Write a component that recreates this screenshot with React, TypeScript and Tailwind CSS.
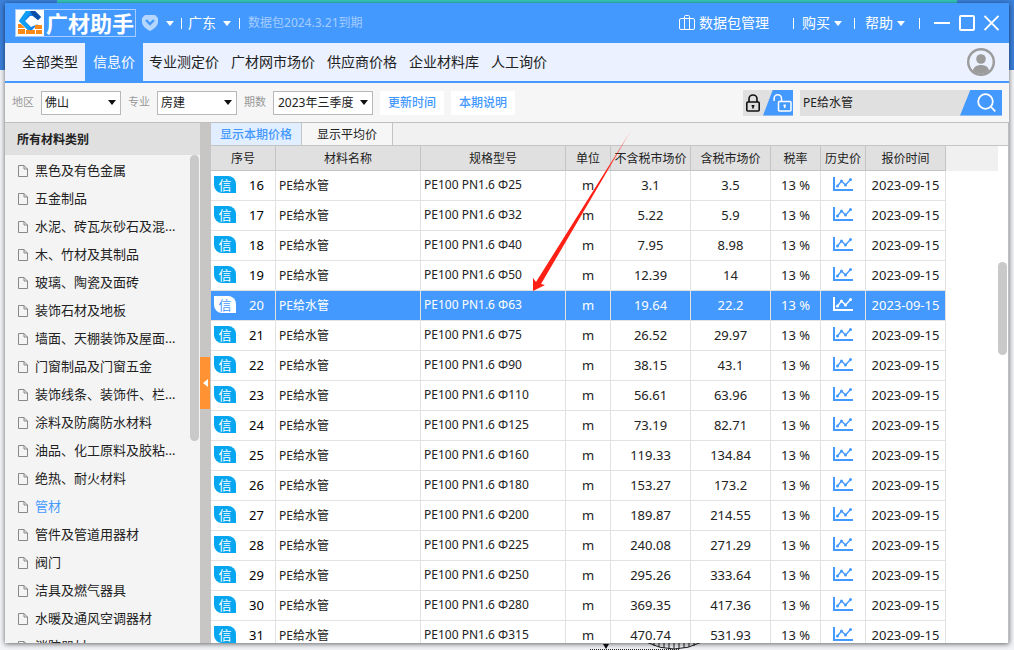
import { useState } from 'react';

const navItems = ['全部类型', '信息价', '专业测定价', '广材网市场价', '供应商价格', '企业材料库', '人工询价'];

const categories = [
    '黑色及有色金属',
    '五金制品',
    '水泥、砖瓦灰砂石及混...',
    '木、竹材及其制品',
    '玻璃、陶瓷及面砖',
    '装饰石材及地板',
    '墙面、天棚装饰及屋面...',
    '门窗制品及门窗五金',
    '装饰线条、装饰件、栏...',
    '涂料及防腐防水材料',
    '油品、化工原料及胶粘...',
    '绝热、耐火材料',
    '管材',
    '管件及管道用器材',
    '阀门',
    '洁具及燃气器具',
    '水暖及通风空调器材',
    '消防器材',
];

const columns = [
    { title: '序号', width: 'w-[65px]' },
    { title: '材料名称', width: 'w-[145px]' },
    { title: '规格型号', width: 'w-[145px]' },
    { title: '单位', width: 'w-[45px]' },
    { title: '不含税市场价', width: 'w-[80px]' },
    { title: '含税市场价', width: 'w-[80px]' },
    { title: '税率', width: 'w-[50px]' },
    { title: '历史价', width: 'w-[45px]' },
    { title: '报价时间', width: 'w-[80px]' },
];

const rows = [
    { id: 16, size: 25, net: '3.1', gross: '3.5' },
    { id: 17, size: 32, net: '5.22', gross: '5.9' },
    { id: 18, size: 40, net: '7.95', gross: '8.98' },
    { id: 19, size: 50, net: '12.39', gross: '14' },
    { id: 20, size: 63, net: '19.64', gross: '22.2' },
    { id: 21, size: 75, net: '26.52', gross: '29.97' },
    { id: 22, size: 90, net: '38.15', gross: '43.1' },
    { id: 23, size: 110, net: '56.61', gross: '63.96' },
    { id: 24, size: 125, net: '73.19', gross: '82.71' },
    { id: 25, size: 160, net: '119.33', gross: '134.84' },
    { id: 26, size: 180, net: '153.27', gross: '173.2' },
    { id: 27, size: 200, net: '189.87', gross: '214.55' },
    { id: 28, size: 225, net: '240.08', gross: '271.29' },
    { id: 29, size: 250, net: '295.26', gross: '333.64' },
    { id: 30, size: 280, net: '369.35', gross: '417.36' },
    { id: 31, size: 315, net: '470.74', gross: '531.93' },
];

function Caret() {
    return (
        <svg width="8" height="5" viewBox="0 0 8 5" fill="currentColor" className="shrink-0">
            <path d="M0 0h8L4 5z" />
        </svg>
    );
}

function Divider() {
    return <span className="h-[11px] w-px bg-white" />;
}

function Logo() {
    return (
        <div className="flex h-7 items-center border border-[#a5cdff]">
            <svg width="28" height="26" viewBox="0 0 28 26">
                <path d="M0 0h28v26H0z" fill="#fff" />
                <path d="M10 1h9l6 6-3 3-5-4h-3l-5 5 6 6 7-3-6 6h-4L3 11z" fill="#1683ec" />
                <path d="M10 1h5L8 11l7 7-3 2-9-9z" fill="#0fa0f5" />
                <path d="M19 1l6 6-3 3-5-4-3-5z" fill="#0d4ea6" />
                <path
                    d="M2 14h3l4 4H2zM19 15h7v4h-7zM2 19h7v5H2zM10 20h9v4h-9zM20 20h6v4h-6z"
                    fill="#ff8a17"
                />
            </svg>
            <span className="pl-0.5 pr-px text-[22px] leading-[26px] font-bold text-white">广材助手</span>
        </div>
    );
}

function TitleBar() {
    return (
        <header className="flex h-10 shrink-0 items-center bg-[#4499ff] px-2.5 text-sm text-white">
            <Logo />
            <button aria-label="会员" className="ml-1.5 flex items-center gap-2">
                <svg width="16" height="16" viewBox="0 0 16 16">
                    <path d="M3 0h10l3 3v4c0 4-4 7-8 9-4-2-8-5-8-9V3z" fill="#b4d6ff" />
                    <path d="M4 5l4 4 4-4" fill="none" stroke="#4499ff" strokeWidth="2.4" />
                </svg>
                <Caret />
            </button>
            <span className="ml-[7px] flex">
                <Divider />
            </span>
            <button className="ml-1.5 flex items-center gap-[7px]">
                广东
                <Caret />
            </button>
            <span className="ml-2 flex">
                <Divider />
            </span>
            <span className="ml-2 text-xs text-[#a5cdff]">数据包2024.3.21到期</span>

            <div className="ml-auto flex items-center">
                <button className="flex items-center gap-1">
                    <svg width="16" height="16" viewBox="0 0 16 16" fill="none" stroke="#fff">
                        <rect x=".5" y="3.5" width="15" height="11" rx="1.5" />
                        <path d="M5.5 14.5v-13q0-1 1-1h3q1 0 1 1v13" />
                    </svg>
                    数据包管理
                </button>
                <span className="mr-2 ml-6 flex">
                    <Divider />
                </span>
                <button className="flex items-center gap-1">
                    购买
                    <Caret />
                </button>
                <span className="mr-2.5 ml-3 flex">
                    <Divider />
                </span>
                <button className="flex items-center gap-1">
                    帮助
                    <Caret />
                </button>
                <span className="mr-3.5 ml-3.5 flex">
                    <Divider />
                </span>
                <div className="flex items-center gap-[9px]">
                    <button aria-label="最小化">
                        <svg width="16" height="16" viewBox="0 0 16 16">
                            <path d="M0 8h16" stroke="#fff" strokeWidth="2" />
                        </svg>
                    </button>
                    <button aria-label="最大化">
                        <svg width="16" height="16" viewBox="0 0 16 16">
                            <rect x="1" y="1" width="14" height="14" rx="1" fill="none" stroke="#fff" strokeWidth="2" />
                        </svg>
                    </button>
                    <button aria-label="关闭">
                        <svg width="15" height="16" viewBox="0 0 15 16">
                            <path d="M.5 1l14 14M14.5 1l-14 14" stroke="#fff" strokeWidth="1.8" />
                        </svg>
                    </button>
                </div>
            </div>
        </header>
    );
}

function NavBar() {
    return (
        <nav className="flex h-10 shrink-0 items-center border-b-2 border-[#4499ff] bg-[#ebf1ff] pl-2.5 text-sm text-[#222]">
            {navItems.map((item) => (
                <a
                    key={item}
                    href="#"
                    className={`flex h-full items-center ${
                        item === '信息价' ? 'bg-[#4499ff] px-2 text-white' : 'px-1.5 first:px-[7px]'
                    }`}
                >
                    {item}
                </a>
            ))}
            <button aria-label="用户" className="mr-3.5 ml-auto">
                <svg width="28" height="28" viewBox="0 0 28 28">
                    <circle cx="14" cy="14" r="12.8" fill="#ebf1ff" stroke="#9b9b9b" strokeWidth="2.4" />
                    <circle cx="14" cy="11" r="4.8" fill="#9b9b9b" />
                    <path d="M6 23c0-4 4-6 8-6s8 2 8 6q-8 6-16 0z" fill="#9b9b9b" />
                </svg>
            </button>
        </nav>
    );
}

function Picker({ label, value, wide = false }: { label: string; value: string; wide?: boolean }) {
    return (
        <label className="flex items-center gap-[7px] text-[11px] text-[#999]">
            {label}
            <span className="relative flex items-center">
                <select
                    defaultValue={value}
                    className={`h-6 appearance-none border border-[#b8b8b8] bg-white text-xs text-[#222] ${
                        wide ? 'w-[100px] pl-1' : 'w-20 pl-[3px]'
                    }`}
                >
                    <option>{value}</option>
                </select>
                <span className="pointer-events-none absolute right-[5px] text-[#111]">
                    <Caret />
                </span>
            </span>
        </label>
    );
}

function Toolbar() {
    return (
        <div className="flex h-10 shrink-0 items-center border-b border-[#bfbfbf] bg-[#f6f6f6] px-[7px]">
            <div className="flex items-center gap-[7px]">
                <Picker label="地区" value="佛山" />
                <Picker label="专业" value="房建" />
                <Picker label="期数" value="2023年三季度" wide />
                <button className="h-6 bg-white px-2 text-xs font-medium text-[#4499ff]">更新时间</button>
                <button className="h-6 bg-white px-2 text-xs font-medium text-[#4499ff]">本期说明</button>
            </div>

            <div className="ml-auto flex gap-[7px]">
                <div className="flex h-[26px] w-[50px] bg-[#e0e0e0]">
                    <button aria-label="锁定" className="flex w-5 items-center justify-center">
                        <svg width="14" height="18" viewBox="0 0 14 18" fill="none" stroke="#111" strokeWidth="1.6">
                            <rect x=".8" y="8" width="12.4" height="9" rx="1" />
                            <path d="M3 8V5a4 4 0 0 1 8 0v3" />
                            <path d="M7 11v3.5M5.6 11.8h2.8" />
                        </svg>
                    </button>
                    <button
                        aria-label="解锁"
                        className="flex flex-1 items-center justify-end bg-[#4499ff] pr-px [clip-path:polygon(33%_0,100%_0,100%_100%,0_100%)]"
                    >
                        <svg width="19" height="18" viewBox="0 0 19 18" fill="none" stroke="#fff" strokeWidth="1.5">
                            <rect x="5.5" y="7.5" width="12.5" height="9.5" rx="1" />
                            <path d="M8.5 7.5v-3a3.7 3.7 0 0 0-7.4 0V7" />
                            <path d="M11.7 10.5V14M10.4 11.5H13" />
                        </svg>
                    </button>
                </div>
                <form className="flex h-[26px] bg-[#e0e0e0]" onSubmit={(e) => e.preventDefault()}>
                    <input
                        aria-label="搜索材料"
                        defaultValue="PE给水管"
                        className="w-40 bg-transparent pl-[3px] text-xs text-[#222] outline-none"
                    />
                    <button
                        aria-label="搜索"
                        className="flex w-[42px] items-center justify-center bg-[#4499ff] pl-2.5 [clip-path:polygon(25%_0,100%_0,100%_100%,0_100%)]"
                    >
                        <svg width="19" height="19" viewBox="0 0 19 19" fill="none" stroke="#fff" strokeWidth="1.8">
                            <circle cx="8.5" cy="8.5" r="7.3" />
                            <path d="M13.7 13.7l4.6 4.6" />
                        </svg>
                    </button>
                </form>
            </div>
        </div>
    );
}

function Sidebar() {
    const [selected, setSelected] = useState('管材');

    return (
        <aside className="flex w-[195px] shrink-0 flex-col bg-[#f4f4f4] text-[#222]">
            <h2 className="flex h-8 shrink-0 items-center bg-[#e0e0e0] pt-0.5 pl-3 text-xs font-bold">所有材料类别</h2>
            <div className="flex min-h-0 flex-1">
                <ul className="min-w-0 flex-1 overflow-hidden pt-0.5">
                    {categories.map((name) => (
                        <li key={name}>
                            <button
                                onClick={() => setSelected(name)}
                                className={`flex h-7 w-full items-center gap-[7px] pl-[13px] text-[13px] whitespace-nowrap ${
                                    name === selected ? 'text-[#4499ff]' : ''
                                }`}
                            >
                                <svg
                                    width="10"
                                    height="12"
                                    viewBox="0 0 10 12"
                                    fill="none"
                                    stroke="#888"
                                    className="shrink-0"
                                >
                                    <path d="M.5.5H6L9.5 4v7.500h-9zM6 .5V4h3.500" />
                                </svg>
                                {name}
                            </button>
                        </li>
                    ))}
                </ul>
                <div className="w-2.5 pr-px">
                    <div className="h-[286px] rounded-full bg-[#c9c9c9]" />
                </div>
            </div>
        </aside>
    );
}

function TrendIcon() {
    return (
        <svg width="20" height="15" viewBox="0 0 20 15" fill="none" stroke="currentColor" className="mx-auto">
            <path d="M1 0v13h19" strokeWidth="2" />
            <path d="M4.5 9l4-5 4 4 5-5.500" strokeWidth="1.4" />
            <g fill="currentColor" stroke="none">
                <circle cx="4.5" cy="9" r="1.5" />
                <circle cx="8.5" cy="4" r="1.5" />
                <circle cx="12.5" cy="8" r="1.5" />
                <circle cx="17.5" cy="2.5" r="1.5" />
            </g>
        </svg>
    );
}

function PriceTable() {
    const [active, setActive] = useState(20);

    return (
        <table className="w-[735px] shrink-0 table-fixed border-separate border-spacing-0 self-start text-center text-[13px] leading-5 text-[#222]">
            <thead>
                <tr className="h-[26px] bg-[#e0e0e0] text-xs">
                    {columns.map((col) => (
                        <th
                            key={col.title}
                            className={`${col.width} border-t border-r border-b border-[#c4c4c4] p-0 pt-0.5 font-normal whitespace-nowrap`}
                        >
                            {col.title}
                        </th>
                    ))}
                </tr>
            </thead>
            <tbody>
                {rows.map((row) => {
                    const on = row.id === active;
                    return (
                        <tr
                            key={row.id}
                            onClick={() => setActive(row.id)}
                            className={`h-[30px] *:border-r *:border-b *:border-[#e2e2e2] *:p-0 *:pb-0.5 ${
                                on ? 'bg-[#4499ff] text-white' : 'bg-white'
                            }`}
                        >
                            <td>
                                <div className="flex items-center gap-[13px] pl-[3px]">
                                    <span
                                        className={`flex h-[17px] w-[22px] items-center justify-center rounded-tr-lg rounded-bl-lg text-[13px] ${
                                            on ? 'bg-white text-[#4499ff]' : 'bg-[#06a7f0] text-white'
                                        }`}
                                    >
                                        信
                                    </span>
                                    <span className={on ? '' : 'text-black'}>{row.id}</span>
                                </div>
                            </td>
                            <td className="text-left text-xs">
                                <div className="pt-0.5 pl-[3px]">PE给水管</div>
                            </td>
                            <td className="text-left">
                                <div className="pl-[3px] text-xs">PE100 PN1.6 Φ{row.size}</div>
                            </td>
                            <td>m</td>
                            <td>{row.net}</td>
                            <td>{row.gross}</td>
                            <td>13 %</td>
                            <td className={on ? '' : 'text-[#4499ff]'}>
                                <TrendIcon />
                            </td>
                            <td>2023-09-15</td>
                        </tr>
                    );
                })}
            </tbody>
        </table>
    );
}

function PricePanel() {
    return (
        <main className="relative flex min-w-0 flex-1 flex-col border-r border-[#bfbfbf] bg-white">
            <div className="flex h-[22px] shrink-0 bg-[#f1f1f1] text-xs">
                <button className="w-[91px] border-r border-[#c4c4c4] bg-[#e0eeff] pt-0.5 font-medium text-[#4499ff]">
                    显示本期价格
                </button>
                <button className="w-[91px] border-r border-[#c4c4c4] bg-[#f6f6f6] pt-0.5 text-[#222]">
                    显示平均价
                </button>
            </div>
            <div className="flex min-h-0 flex-1 overflow-hidden">
                <PriceTable />
                <div className="flex-1">
                    <div className="h-[26px] border-t border-[#c4c4c4] bg-[#f0f0f0]" />
                </div>
                <div className="w-2.5 border-t border-[#c4c4c4] pt-[116px] pr-px">
                    <div className="h-[93px] rounded-full bg-[#c9c9c9]" />
                </div>
            </div>
            {/* pointer to the highlighted row */}
            <svg
                width="100"
                height="163"
                viewBox="0 0 100 163"
                className="pointer-events-none absolute top-[6px] left-[322px]"
            >
                <defs>
                    <linearGradient id="fade" x1="1" y1="0" x2="0" y2="1">
                        <stop offset="0" stopColor="#ff2015" stopOpacity=".3" />
                        <stop offset=".25" stopColor="#ff2015" />
                    </linearGradient>
                </defs>
                <path d="M99 0L3 153l-3-4v13l12-6-4-1z" fill="url(#fade)" />
            </svg>
        </main>
    );
}

function Backdrop() {
    return (
        <div className="absolute inset-0 bg-[#f1f3f7]">
            <div className="h-[70px] bg-[#3b80dc]">
                <div className="mx-[57px] h-3 bg-[#36c9be]" />
            </div>
            <svg width="120" height="8" viewBox="0 0 120 8" className="absolute bottom-0 left-[590px]">
                <path d="M0 7.500h90" stroke="#222" strokeDasharray="1 1" />
                <path d="M13 2h6l-3 5z" fill="#111" />
                <path
                    d="M56 0q28 14 56 0M64 0v4M69 0v5M74 0v6M79 0v7M84 0v7M89 0v7M94 0v6M99 0v5M104 0v4"
                    fill="none"
                    stroke="#222"
                />
            </svg>
        </div>
    );
}

export default function App() {
    return (
        <div className="relative flex h-screen overflow-hidden px-[5px] pt-[3px] pb-[7px] font-['Noto_Sans','Noto_Sans_CJK_SC',sans-serif]">
            <Backdrop />
            <div className="relative flex min-w-0 flex-1 flex-col bg-white shadow-[0_1px_5px_rgba(0,0,0,0.6)]">
                <TitleBar />
                <NavBar />
                <Toolbar />
                <div className="flex min-h-0 flex-1">
                    <Sidebar />
                    <div className="flex w-[11px] shrink-0 items-center bg-[#c8c6c5]">
                        <button
                            aria-label="收起"
                            className="flex h-[52px] w-2.5 items-center justify-center bg-[#ff9232] text-white"
                        >
                            <svg width="5" height="8" viewBox="0 0 5 8" fill="currentColor">
                                <path d="M5 0v8L0 4z" />
                            </svg>
                        </button>
                    </div>
                    <PricePanel />
                </div>
            </div>
        </div>
    );
}
